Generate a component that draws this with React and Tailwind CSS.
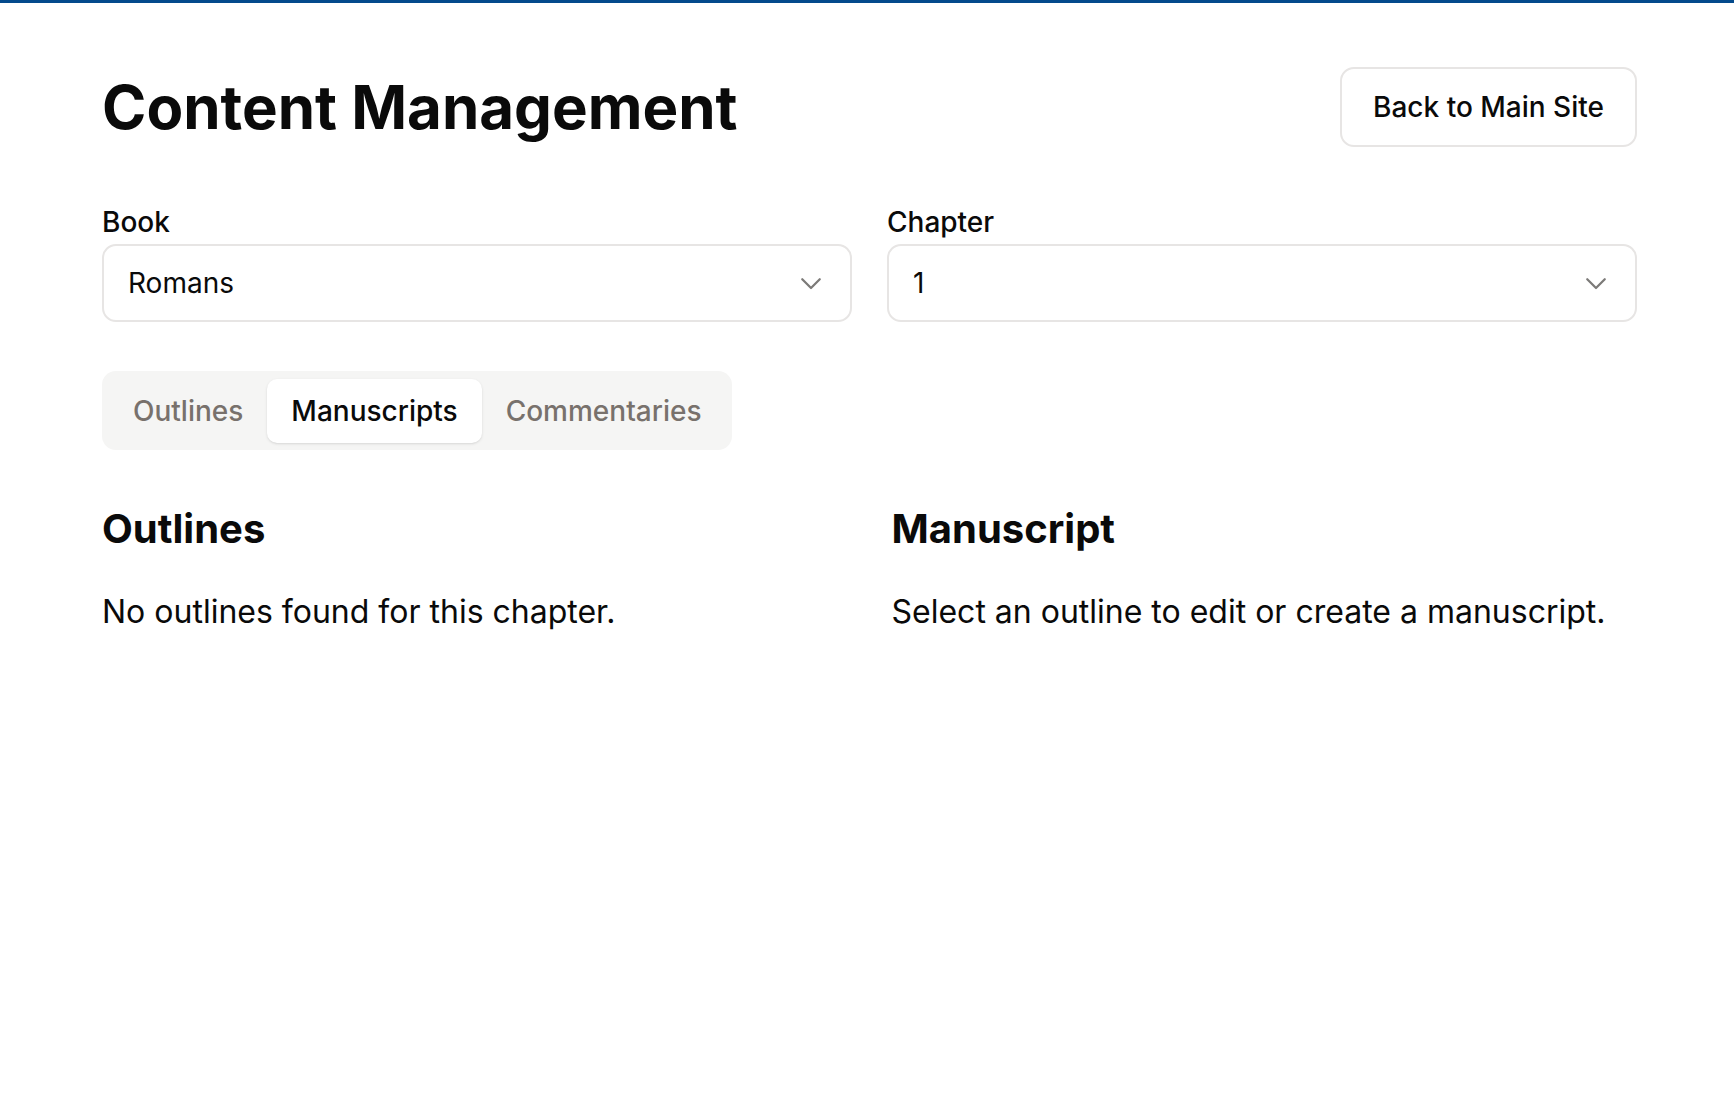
import React, { useState } from "react";

function Chevron() {
  return (
    <svg width="30" height="30" viewBox="0 0 24 24" fill="none" stroke="currentColor" strokeWidth="1.8" strokeLinecap="round" strokeLinejoin="round" className="text-[#7c7a78]">
      <path d="m5 9 7 7 7-7" />
    </svg>
  );
}

function SelectBox({ label, value }) {
  return (
    <div className="flex flex-col">
      <label className="text-[28px] leading-[35px] font-medium text-[#0a0a0a] mb-[4px]">{label}</label>
      <div className="h-[78px] flex items-center justify-between border-2 border-[#e7e5e4] rounded-[14px] bg-white pl-[24px] pr-[24px]">
        <span className="text-[28px] text-[#0a0a0a]">{value}</span>
        <Chevron />
      </div>
    </div>
  );
}

export default function App() {
  const [tab, setTab] = useState("Manuscripts");
  const tabs = ["Outlines", "Manuscripts", "Commentaries"];

  return (
    <div className="min-h-screen bg-white font-['Inter','Noto_Sans',sans-serif] text-[#0a0a0a]">
      {/* top accent */}
      <div className="h-[3px] bg-[#044a8c]" />

      <div className="pl-[102px] pr-[97px] pt-[64px]">
        {/* Header */}
        <div className="flex items-center justify-between">
          <h1 className="text-[60px] leading-[70px] font-bold">Content Management</h1>
          <button className="h-[80px] w-[297px] border-2 border-[#e7e5e4] rounded-[14px] bg-white text-[28px] font-medium text-[#0a0a0a]">
            Back to Main Site
          </button>
        </div>

        {/* Book / Chapter */}
        <div className="grid grid-cols-2 gap-[35px] mt-[58px]">
          <SelectBox label="Book" value="Romans" />
          <SelectBox label="Chapter" value="1" />
        </div>

        {/* Tabs */}
        <div className="mt-[49px] inline-flex items-center h-[79px] p-[7px] rounded-[14px] bg-[#f5f5f4]">
          {tabs.map((t) => (
            <button
              key={t}
              onClick={() => setTab(t)}
              className={
                t === tab
                  ? "h-[64px] px-[24px] rounded-[10px] bg-white text-[28px] font-medium text-[#0a0a0a] shadow-sm"
                  : "h-[64px] px-[24px] rounded-[10px] text-[28px] font-medium text-[#78716c]"
              }
            >
              {t}
            </button>
          ))}
        </div>

        {/* Panels */}
        <div className="grid grid-cols-2 gap-[44px] mt-[51px]">
          <div>
            <h2 className="text-[40px] leading-[56px] font-bold">Outlines</h2>
            <p className="mt-[30px] text-[32px] leading-[49px]">No outlines found for this chapter.</p>
          </div>
          <div>
            <h2 className="text-[40px] leading-[56px] font-bold">Manuscript</h2>
            <p className="mt-[30px] text-[32px] leading-[49px]">Select an outline to edit or create a manuscript.</p>
          </div>
        </div>
      </div>
    </div>
  );
}
